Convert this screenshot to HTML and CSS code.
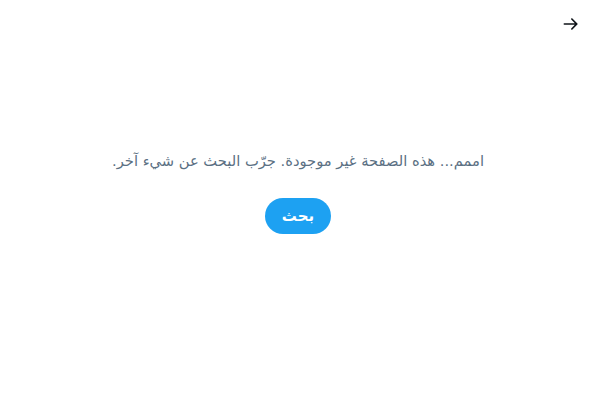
FILE: index.html
```html
<!DOCTYPE html>
<html lang="ar" dir="rtl">
<head>
<meta charset="utf-8">
<link rel="stylesheet" href="styles.css">
</head>
<body>
<header class="top-bar">
  <button class="back-btn" aria-label="رجوع">
    <svg viewBox="0 0 24 24" width="20" height="20"><path d="M20 11H7.414l4.293-4.293c.39-.39.39-1.023 0-1.414s-1.023-.39-1.414 0l-6 6c-.39.39-.39 1.023 0 1.414l6 6c.195.195.45.293.707.293s.512-.098.707-.293c.39-.39.39-1.023 0-1.414L7.414 13H20c.553 0 1-.447 1-1s-.447-1-1-1z" transform="matrix(-1 0 0 1 24 0)"/></svg>
  </button>
</header>
<main class="notfound">
  <p class="message">اممم... هذه الصفحة غير موجودة. جرّب البحث عن شيء آخر.</p>
  <a class="search-btn" href="#">بحث</a>
</main>
</body>
</html>
```

FILE: styles.css
```css
html, body {
  margin: 0;
  padding: 0;
  background: #ffffff;
  font-family: "DejaVu Sans", "Noto Sans", sans-serif;
}
.top-bar {
  height: 48px;
  display: flex;
  align-items: center;
  padding: 0 15px;
}
.back-btn {
  border: 0;
  background: transparent;
  padding: 0;
  width: 20px;
  height: 20px;
  display: flex;
  color: #0f1419;
  fill: currentColor;
}
.notfound {
  display: flex;
  flex-direction: column;
  align-items: center;
  padding-top: 103px;
}
.message {
  margin: 0;
  font-size: 14.7px;
  line-height: 20px;
  color: #5b7083;
}
.search-btn {
  margin-top: 27px;
  display: flex;
  align-items: center;
  justify-content: center;
  height: 36px;
  min-width: 66px;
  padding: 0 16px;
  box-sizing: border-box;
  border-radius: 9999px;
  background: #1da1f2;
  color: #ffffff;
  font-weight: bold;
  font-size: 15px;
  text-decoration: none;
}
```
